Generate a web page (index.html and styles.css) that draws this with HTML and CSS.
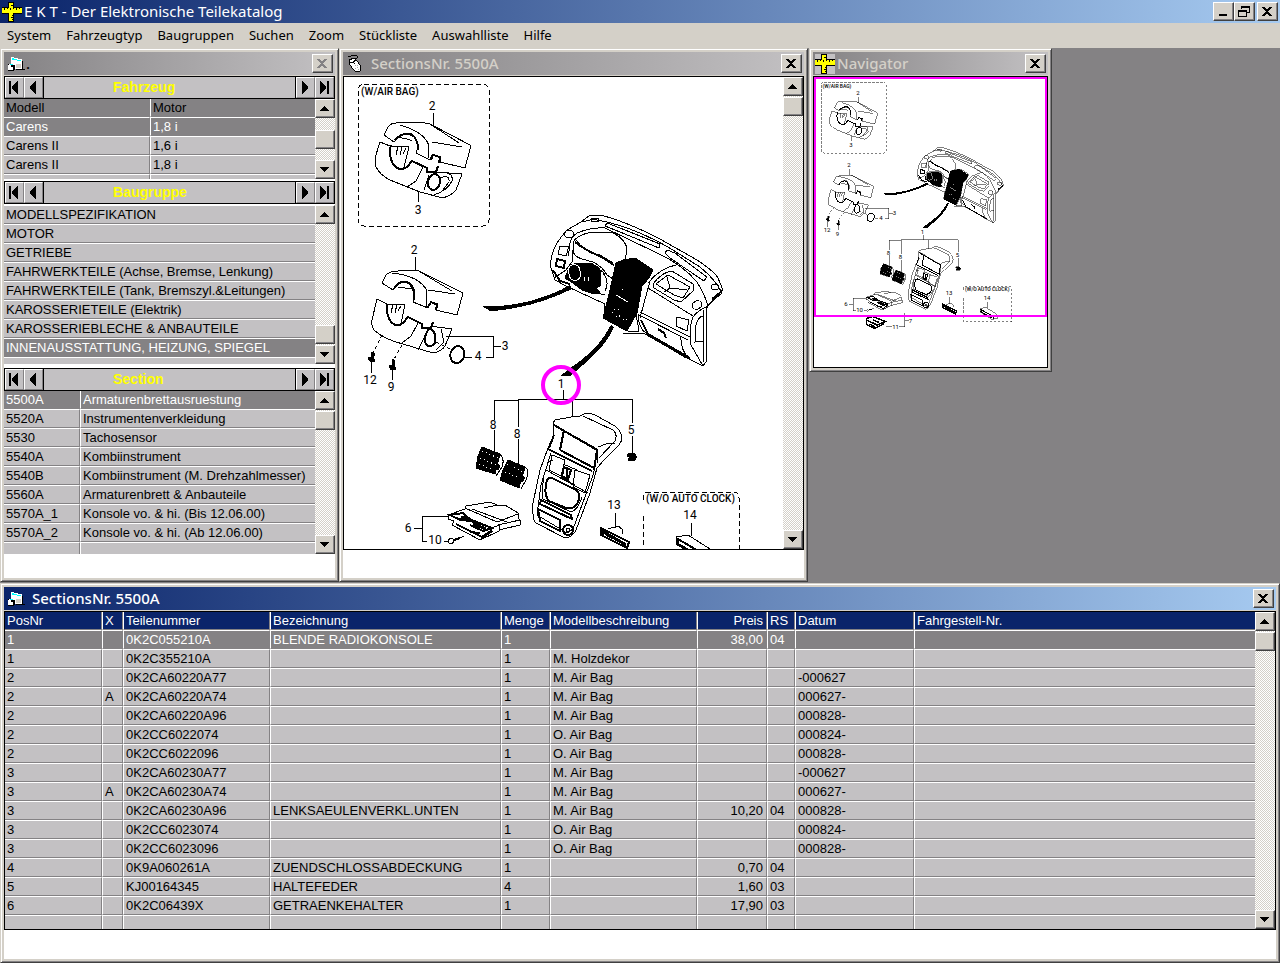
FILE: index.html
```html
<!DOCTYPE html>
<html lang="de">
<head>
    <meta charset="UTF-8">
    <meta name="viewport" content="width=device-width, initial-scale=1.0">
    <title>E K T - Der Elektronische Teilekatalog</title>
    <link rel="stylesheet" href="styles.css">
</head>
<body>
    <!-- shared icons -->
    <svg class="defs" width="0" height="0" aria-hidden="true">
        <symbol id="i-close" viewBox="0 0 10 9"><path d="M0 0h3v1h1v1h2v-1h1v-1h3v1h-1v1h-1v1h-1v1h-1v1h1v1h1v1h1v1h1v1h-3v-1h-1v-1h-2v1h-1v1h-3v-1h1v-1h1v-1h1v-1h1v-1h-1v-1h-1v-1h-1v-1h-1z"/></symbol>
        <symbol id="i-up" viewBox="0 0 9 5"><path d="M4 0h1v1h1v1h1v1h1v1h1v1h-9v-1h1v-1h1v-1h1v-1h1z"/></symbol>
        <symbol id="i-down" viewBox="0 0 9 5"><path d="M0 0h9v1h-1v1h-1v1h-1v1h-1v1h-1v-1h-1v-1h-1v-1h-1v-1h-1z"/></symbol>
        <symbol id="i-first" viewBox="0 0 10 13"><path d="M0 0h2v13h-2zM9 0v13h-1l-5-6v-1l5-6z"/></symbol>
        <symbol id="i-prev" viewBox="0 0 10 13"><path d="M8 0v13h-1l-5-6v-1l5-6z"/></symbol>
        <symbol id="i-next" viewBox="0 0 10 13"><path d="M2 0v13h1l5-6v-1l-5-6z"/></symbol>
        <symbol id="i-last" viewBox="0 0 10 13"><path d="M8 0h2v13h-2zM1 0v13h1l5-6v-1l-5-6z"/></symbol>
        <symbol id="i-ruler" viewBox="0 0 20 20">
            <path fill="#000" d="M6 0h6v20h-6zM0 5h20v7h-20z"/>
            <path fill="#ff0" d="M7 1h4v18h-4zM0 6h20v5h-20z"/>
            <path fill="#000" d="M9 3h2v1h-2zM10 13h1v1h-1zM9 15h2v1h-2zM10 17h1v1h-1zM2 6h1v2h-1zM5 6h1v1h-1zM8 6h1v2h-1zM11 6h1v1h-1zM14 6h1v2h-1zM17 6h1v1h-1z"/>
        </symbol>
        <symbol id="i-form" viewBox="0 0 18 16">
            <path fill="#fff" d="M3 1h3v1h4v1h4v10h-8v-4h-3z"/>
            <path fill="#d4d0c8" d="M8 8h5v4h-5z"/>
            <path fill="#0ff" d="M4 2h2v1h3v1h4v1h-4v-1h-5z"/>
            <path fill="#000" d="M14 5h1v8h2v1h-9v-1h6z"/>
            <path fill="#fff" d="M0 8h6v6h-6z"/>
            <path fill="#000" d="M3 9h4v5h-1v1h-6v-1h5v-3h-2zM0 8h1v1h-1z"/>
            <path fill="#0ff" d="M2 8h3v1h-3z"/>
        </symbol>
        <symbol id="i-mouse" viewBox="0 0 16 18">
            <path fill="none" stroke="#000" d="M1 2Q5 0 10 1Q11 4 7 3Q4 3 5 6"/>
            <path fill="#fff" stroke="#000" d="M2 5L7 3L11 7L14 12L13 16L9 17L5 13L2 8Z"/>
            <path fill="none" stroke="#000" d="M3 8L6 7L9 5M6 7L8 9"/>
            <path fill="#aaa" d="M8 10h1v1h-1zM10 12h1v1h-1zM8 13h1v1h-1zM11 14h1v1h-1zM10 10h1v1h-1z"/>
        </symbol>
    </svg>

    <header class="app-title">
        <svg class="icon-app"><use href="#i-ruler"/></svg>
        <h1>E K T - Der Elektronische Teilekatalog</h1>
        <button class="tb" aria-label="Minimieren"><svg width="8" height="9"><path d="M0 7h8v2h-8z"/></svg></button>
        <button class="tb" aria-label="Wiederherstellen"><svg width="12" height="11"><path fill-rule="evenodd" d="M3 0h9v7h-3v-1h2v-4h-7v1h-1zM0 4h9v7h-9zM1 6v4h7v-4z"/></svg></button>
        <button class="tb tb-close" aria-label="Schließen"><svg width="10" height="9"><use href="#i-close"/></svg></button>
    </header>

    <nav class="menu">
        <button>System</button>
        <button>Fahrzeugtyp</button>
        <button>Baugruppen</button>
        <button>Suchen</button>
        <button>Zoom</button>
        <button>Stückliste</button>
        <button>Auswahlliste</button>
        <button>Hilfe</button>
    </nav>

    <main class="mdi">
        <div class="top">
            <section class="window selection">
                <div class="title">
                    <svg class="icon-form"><use href="#i-form"/></svg>
                    <h2 class="dot">.</h2>
                    <button class="tb disabled" aria-label="Schließen" disabled><svg width="10" height="9"><use href="#i-close"/></svg></button>
                </div>
                <div class="client">
                    <div class="navbar">
                        <button aria-label="Erster"><svg><use href="#i-first"/></svg></button>
                        <button aria-label="Zurück"><svg><use href="#i-prev"/></svg></button>
                        <h3>Fahrzeug</h3>
                        <button aria-label="Weiter"><svg><use href="#i-next"/></svg></button>
                        <button aria-label="Letzter"><svg><use href="#i-last"/></svg></button>
                    </div>
                    <div class="list list-vehicle">
                        <div class="grid-wrap">
                            <table class="grid flush">
                                <colgroup><col class="c-model"><col></colgroup>
                                <thead><tr><th>Modell</th><th>Motor</th></tr></thead>
                                <tbody>
                                    <tr class="selected"><td>Carens</td><td>1,8 i</td></tr>
                                    <tr><td>Carens II</td><td>1,6 i</td></tr>
                                    <tr><td>Carens II</td><td>1,8 i</td></tr>
                                    <tr><td></td><td></td></tr>
                                </tbody>
                            </table>
                        </div>
                        <div class="scroll">
                            <button aria-label="Nach oben"><svg><use href="#i-up"/></svg></button>
                            <div class="track middle"><div class="thumb"></div></div>
                            <button aria-label="Nach unten"><svg><use href="#i-down"/></svg></button>
                        </div>
                    </div>

                    <div class="navbar">
                        <button aria-label="Erster"><svg><use href="#i-first"/></svg></button>
                        <button aria-label="Zurück"><svg><use href="#i-prev"/></svg></button>
                        <h3>Baugruppe</h3>
                        <button aria-label="Weiter"><svg><use href="#i-next"/></svg></button>
                        <button aria-label="Letzter"><svg><use href="#i-last"/></svg></button>
                    </div>
                    <div class="list list-group">
                        <div class="grid-wrap">
                            <table class="grid">
                                <tbody>
                                    <tr><td>MODELLSPEZIFIKATION</td></tr>
                                    <tr><td>MOTOR</td></tr>
                                    <tr><td>GETRIEBE</td></tr>
                                    <tr><td>FAHRWERKTEILE (Achse, Bremse, Lenkung)</td></tr>
                                    <tr><td>FAHRWERKTEILE (Tank, Bremszyl.&amp;Leitungen)</td></tr>
                                    <tr><td>KAROSSERIETEILE (Elektrik)</td></tr>
                                    <tr><td>KAROSSERIEBLECHE &amp; ANBAUTEILE</td></tr>
                                    <tr class="selected"><td>INNENAUSSTATTUNG, HEIZUNG, SPIEGEL</td></tr>
                                    <tr><td></td></tr>
                                </tbody>
                            </table>
                        </div>
                        <div class="scroll">
                            <button aria-label="Nach oben"><svg><use href="#i-up"/></svg></button>
                            <div class="track bottom"><div class="thumb"></div></div>
                            <button aria-label="Nach unten"><svg><use href="#i-down"/></svg></button>
                        </div>
                    </div>

                    <div class="navbar">
                        <button aria-label="Erster"><svg><use href="#i-first"/></svg></button>
                        <button aria-label="Zurück"><svg><use href="#i-prev"/></svg></button>
                        <h3>Section</h3>
                        <button aria-label="Weiter"><svg><use href="#i-next"/></svg></button>
                        <button aria-label="Letzter"><svg><use href="#i-last"/></svg></button>
                    </div>
                    <div class="list list-section">
                        <div class="grid-wrap">
                            <table class="grid flush">
                                <colgroup><col class="c-section"><col></colgroup>
                                <tbody>
                                    <tr class="selected"><td>5500A</td><td>Armaturenbrettausruestung</td></tr>
                                    <tr><td>5520A</td><td>Instrumentenverkleidung</td></tr>
                                    <tr><td>5530</td><td>Tachosensor</td></tr>
                                    <tr><td>5540A</td><td>Kombiinstrument</td></tr>
                                    <tr><td>5540B</td><td>Kombiinstrument (M. Drehzahlmesser)</td></tr>
                                    <tr><td>5560A</td><td>Armaturenbrett &amp; Anbauteile</td></tr>
                                    <tr><td>5570A_1</td><td>Konsole vo. &amp; hi. (Bis 12.06.00)</td></tr>
                                    <tr><td>5570A_2</td><td>Konsole vo. &amp; hi. (Ab 12.06.00)</td></tr>
                                    <tr><td></td><td></td></tr>
                                </tbody>
                            </table>
                        </div>
                        <div class="scroll">
                            <button aria-label="Nach oben"><svg><use href="#i-up"/></svg></button>
                            <div class="track"><div class="thumb"></div></div>
                            <button aria-label="Nach unten"><svg><use href="#i-down"/></svg></button>
                        </div>
                    </div>
                </div>
            </section>

            <section class="window picture">
                <div class="title">
                    <svg class="icon-mouse"><use href="#i-mouse"/></svg>
                    <h2>SectionsNr. 5500A</h2>
                    <button class="tb" aria-label="Schließen"><svg width="10" height="9"><use href="#i-close"/></svg></button>
                </div>
                <div class="client">
                    <div class="viewer">
                        <!-- exploded drawing of section 5500A -->
                        <svg class="drawing" viewBox="344 77 439 472" preserveAspectRatio="xMinYMin slice">
                            <g id="drawing">
                                <g fill="none" stroke="#000">
                                    <!-- covers with air bag -->
                                    <rect x="358" y="84" width="131" height="142" rx="6" stroke-dasharray="5 3"/>
                                    <path d="M384 135L388 127Q391 123 396 123L422 122.500L430 124L470 145L470 149L465 168L440 162L441 157L432 155L430 160L416 153Q420 144 415 138Q407 131 399 136L394 142Z"/>
                                    <path d="M400 125Q425 132 429 146L428 158M432 142L462 147M430 124L459 143M397 138Q405 137 412 141"/>
                                    <path stroke-width="2" d="M395 140Q402 132 411 134Q418 138 418 150M431 160L433 155L440 157L439 163"/>
                                    <path d="M380 142L375 158L376 167Q380 175 390 180L420 192L443 198Q452 195 456 190L462 174L435 172M380 142L390 146L409 147L404 167M398 146L396 155M402 147L400 155M406 148L403 154"/>
                                    <path stroke-width="2" d="M391 145Q388 155 393 164Q399 172 407 167L412 161L427 168L427 172L436 172L438 166"/>
                                    <path d="M423 167L416 181L407 187M424 190L429 175M438 173Q454 171 452 181Q448 190 434 195M440 178Q450 174 449 182L442 191"/>
                                    <ellipse cx="434" cy="182" rx="6" ry="8" stroke-width="2" transform="rotate(15 434 182)"/>
                                    <path d="M433.500 113V126M418.500 191V202"/>

                                    <!-- covers without air bag -->
                                    <path d="M382 283L386 275Q390 271 398 271L417 270L463 293L457 315L436 310L438 304L431 302L428 308L413 302L415 294Q414 283 405 281Q397 281 393 290Z"/>
                                    <path d="M392 273Q420 276 427 291L426 307M428 290L455 294M417 270L452 291M398 287L412 289"/>
                                    <path stroke-width="2" d="M394 289Q398 281 406 282Q415 285 414 300M428 307L431 302L437 305L436 310"/>
                                    <path d="M377 299L372 320Q371 327 375 331Q386 340 403 344L433 353Q441 352 445 346L452 329L430 326M377 299L387 304L405 304L401 324M393 304L391 313M397 304L395 313M401 306L398 311"/>
                                    <path stroke-width="2" d="M387 304Q386 315 391 322Q397 328 403 323L408 317L422 324V328L431 328L433 322"/>
                                    <path d="M418 323L411 336L402 343M418 350L428 330M441 329L444 342L436 350"/>
                                    <path d="M430 328Q437 332 435 343Q428 350 425 342Q424 334 430 328Z" stroke-width="2"/>
                                    <path stroke-dasharray="3 3" d="M382 335L373 353M402 345L393 361M436 342L452 350"/>
                                    <ellipse cx="457.500" cy="354.500" rx="7" ry="8.500" stroke-width="2" transform="rotate(15 457 354)"/>
                                    <path d="M415.500 257V270M446 336.500H493.500V357.500H486M465 357.500H472M493 346.500H501M371.500 362V373M392.500 370V380"/>
                                    <path fill="#000" d="M372 352L375 354L373 358L375 361L371 362L368 358L371 357ZM393 359L395 362L394 366L396 369L391 370L389 366L392 365Z"/>

                                    <!-- dashboard -->
                                    <path d="M590 215L600 215Q625 221 660 239L697 260Q715 272 718 278L723 290L712 301L706 309V362M590 215L581 222L567 230Q555 243 552 255L550 265L555 280L566 286L605 304M604 303L604 318M706 362L703 366L687 358L645 334L623 333"/>
                                    <path d="M590 219Q625 223 668 247L700 267Q716 280 722 293L708 305M582 222L590 220M569 256Q568 238 577 233Q592 227 605 228L655 252Q682 264 697 282Q705 295 708 306Q698 310 693 317Q689 326 691 345L703 366M703 310V362M607 223L620 228L660 244L659 248L620 232L605 226ZM667 250L675 253L707 277L704 281L670 258L665 253Z"/>
                                    <path d="M573 250V242Q577 235 592 232L613 233Q627 240 627 251L625 260M573 250Q573 256 582 259L593 262Q603 267 607 275L614 280M576 240Q584 252 600 255L613 263M554 278L566 270L572 262L573 250M605 291Q610 282 603 273M593 292L605 295M600 270L613 279"/>
                                    <path stroke-width="2" d="M575 242Q588 252 600 256L614 265M557 259L565 261L564 268L556 266Z"/>
                                    <path d="M648 283Q660 268 676 265M640 318L650 281M653 284Q662 272 672 271L693 284L694 290L681 302L674 300L654 288ZM656 284L668 275L690 287L683 298L674 295ZM667 277L670 288L687 290M670 288L664 292"/>
                                    <path d="M648 288L693 316M640 312L690 337M639 315L688 340M638 314Q638 328 647 334L686 358M681 336Q680 348 688 358M677 317L689 320L687 331L676 326ZM696 325Q698 317 703 316M696 325L695 342L703 341M560 246H569L566 256L558 254ZM636 314L639 331L628 332"/>
                                    <ellipse cx="569" cy="234" rx="5" ry="4"/>
                                    <ellipse cx="595" cy="220" rx="4" ry="2"/>
                                    <ellipse cx="697" cy="305" rx="5" ry="4" transform="rotate(-30 697 305)"/>
                                    <ellipse cx="715" cy="287" rx="4" ry="3"/>
                                    <path stroke-width="2" d="M658 329L664 333L666 338M641 320L648 334L690 358M712 299L722 291M553 270L560 281L570 284"/>
                                    <path fill="#000" d="M570 265L578 263L591 263L599 268L601 274L600 286L596 288L600 292L594 294L582 290L573 283L565 278Z"/>
                                    <path fill="#000" d="M616 263L623 260L635 258L653 270L649 278L642 286L637 313L627 331L603 318L606 306L610 290Z"/>
                                    <path stroke="#fff" d="M569 274A6 6 0 1 0 580 271A6 6 0 1 0 569 274M584 277V281M588 277L589 281"/>
                                    <path stroke="#fff" stroke-dasharray="1 3" d="M612 312L627 320M616 316L624 320M622 289H624M614 309H622"/>
                                    <path stroke="#fff" d="M616 295L628 302"/>
                                    <path fill="#000" stroke="none" d="M482 306Q500 308 530 301Q555 294 570 285L572 289Q545 302 520 307Q500 311 490 311ZM611 325Q600 346 580 361Q570 368 560 376L570 376Q580 368 592 357Q607 343 614 327Z"/>

                                    <!-- console bezel and parts -->
                                    <path d="M494.500 420V400.500H518M494.500 430V452M518.500 427V399.500H632.500V423M518.500 439V464M572.500 399V417M632.500 436V453M563.500 390V399"/>
                                    <path fill="#000" d="M482 447L500 454L495 474L476 468L478 456ZM508 460L525 467L519 488L500 480L503 470Z"/>
                                    <path d="M500 454Q505 459 502 467L496 476M525 467Q530 470 526 480L521 489"/>
                                    <path stroke="#fff" stroke-dasharray="1 3" d="M482 451L498 458M480 458L496 465M507 464L523 472M505 472L520 478M479 464L493 470"/>
                                    <path fill="#000" d="M497 464L500 466L498 470L496 468ZM523 476L525 478L522 482L520 480ZM628 454L634 453L637 457L634 461L628 460L630 457L627 456Z"/>
                                    <path d="M553 423L555 420L571 417L580 416L586 413Q592 413 597 416L613 425Q620 428 622 437Q622 441 619 445L604 460L597 468L590 493L576 530Q573 537 565 538L536 523Q532 520 533 503L540 470L548 448L554 435ZM553 424L597 449L598 463M583 416L613 430Q618 434 615 441L599 458M598 447L606 444L615 443M551 453L541 485L537 515L567 533L573 529L592 478L595 468"/>
                                    <path stroke-width="2" d="M554 425L597 450L594 470M564 430L560 450M548 449L592 471M554 435L549 448M560 450L594 468"/>
                                    <path d="M552 455L565 460L561 476L549 470ZM575 470L590 475L585 493L573 487ZM563 464L577 470M548 462L553 460M560 477L575 485M546 470L588 493"/>
                                    <path stroke-width="2" d="M564 467L571 470L568 480L562 476ZM567 468V478M547 480Q550 476 556 480L576 490Q582 495 577 504Q573 510 566 508L549 501Q543 494 547 480ZM541 500L571 515L572 519L540 504ZM538 509L560 520V531L540 521Z"/>
                                    <path d="M544 477Q541 492 543 499L571 512Q578 510 582 497"/>
                                    <circle cx="568" cy="530" r="5" stroke-width="2"/>
                                    <circle cx="568" cy="530" r="2"/>
                                    <path d="M448 515L465 509L466 506L490 502L497 505L505 505L518 513V518L520 520V525L499 530M448 515L492 528L499 525V531L480 540L452 525L454 521L448 519ZM472 509L507 522M497 505L484 508M518 514L497 522L465 508M520 520L498 525M481 539L493 531"/>
                                    <path stroke-width="2" d="M450 515L463 513L472 521L460 520ZM464 517L492 528L483 531L470 525M456 524L482 537L492 530M470 532L480 533"/>
                                    <path stroke-width="3" d="M461 517L470 520M473 524L486 529"/>
                                    <path d="M414 528.500H422M448 516.500H422.500V541.500H427M444 541.500H448"/>
                                    <circle cx="451" cy="541" r="2.500"/>
                                    <path stroke-width="2" d="M454 540L460 538"/>
                                    <path d="M460 538L464 536M615.500 513V528M608 529L618 526L622 529V534M607 530L609 533M691.500 523V536"/>
                                    <path stroke-width="2" d="M601 528L629 542L627 548L601 535ZM603 530L603 536M606 535L624 543"/>
                                    <path stroke-width="3" d="M604 532L626 545"/>
                                    <path d="M643 545V515M643 500V498Q643 492 650 492H733Q739 492 739 498V563H643V549" stroke-dasharray="5 3"/>
                                    <path d="M676 537L688 535L710 549L712 556L700 559L676 544Z"/>
                                    <path stroke-width="2" d="M676 538L702 553V558M676 543L700 556M678 540V544"/>
                                </g>
                                <g class="labels">
                                    <text class="caption" x="361" y="95">(W/AIR BAG)</text>
                                    <text class="caption" x="646" y="502">(W/O AUTO CLOCK)</text>
                                    <text x="432" y="110">2</text>
                                    <text x="418" y="214">3</text>
                                    <text x="414" y="254">2</text>
                                    <text x="505" y="350">3</text>
                                    <text x="478" y="360">4</text>
                                    <text x="370" y="384">12</text>
                                    <text x="391" y="391">9</text>
                                    <text x="561" y="388">1</text>
                                    <text x="493" y="429">8</text>
                                    <text x="517" y="438">8</text>
                                    <text x="631" y="434">5</text>
                                    <text x="408" y="532">6</text>
                                    <text x="435" y="544">10</text>
                                    <text x="614" y="509">13</text>
                                    <text x="690" y="519">14</text>
                                </g>
                            </g>
                            <circle class="marker" cx="561" cy="385" r="18"/>
                        </svg>
                        <div class="scroll">
                            <button aria-label="Nach oben"><svg><use href="#i-up"/></svg></button>
                            <div class="track"><div class="thumb"></div></div>
                            <button aria-label="Nach unten"><svg><use href="#i-down"/></svg></button>
                        </div>
                    </div>
                </div>
            </section>

            <section class="window navigator">
                <div class="title">
                    <span class="icon-box"><svg class="icon-app"><use href="#i-ruler"/></svg></span>
                    <h2>Navigator</h2>
                    <button class="tb" aria-label="Schließen"><svg width="10" height="9"><use href="#i-close"/></svg></button>
                </div>
                <div class="overview">
                    <svg class="drawing small" viewBox="0 0 233 290">
                        <use href="#drawing" transform="scale(.5) translate(-344 -74)"/>
                        <!-- lighter, below the part shown in the picture window -->
                        <g transform="scale(.5) translate(-344 -74)">
                            <path fill="none" stroke="#000" stroke-width="3" d="M449 557L462 553L486 563L470 570L449 560V569L466 577L484 567M455 568L466 574M462 560L474 565"/>
                            <path fill="none" stroke="#000" d="M487 573H500M514 573H525V545M525 561H533"/>
                            <g class="labels">
                                <text x="507" y="577">11</text>
                                <text x="537" y="565">7</text>
                            </g>
                        </g>
                        <rect class="frame" x="1" y="1" width="231" height="238"/>
                    </svg>
                </div>
            </section>
        </div>

        <section class="window active parts">
            <div class="title">
                <svg class="icon-form"><use href="#i-form"/></svg>
                <h2>SectionsNr. 5500A</h2>
                <button class="tb" aria-label="Schließen"><svg width="10" height="9"><use href="#i-close"/></svg></button>
            </div>
            <div class="client">
                <div class="list list-parts">
                    <div class="grid-wrap">
                        <table class="grid flush">
                            <colgroup>
                                <col class="c-pos"><col class="c-x"><col class="c-number"><col class="c-name"><col class="c-qty">
                                <col class="c-desc"><col class="c-price"><col class="c-rs"><col class="c-date"><col>
                            </colgroup>
                            <thead>
                                <tr><th>PosNr</th><th>X</th><th>Teilenummer</th><th>Bezeichnung</th><th>Menge</th><th>Modellbeschreibung</th><th class="num">Preis</th><th>RS</th><th>Datum</th><th>Fahrgestell-Nr.</th></tr>
                            </thead>
                            <tbody>
                                <tr class="selected"><td>1</td><td></td><td>0K2C055210A</td><td>BLENDE RADIOKONSOLE</td><td>1</td><td></td><td class="num">38,00</td><td>04</td><td></td><td></td></tr>
                                <tr><td>1</td><td></td><td>0K2C355210A</td><td></td><td>1</td><td>M. Holzdekor</td><td></td><td></td><td></td><td></td></tr>
                                <tr><td>2</td><td></td><td>0K2CA60220A77</td><td></td><td>1</td><td>M. Air Bag</td><td></td><td></td><td>-000627</td><td></td></tr>
                                <tr><td>2</td><td>A</td><td>0K2CA60220A74</td><td></td><td>1</td><td>M. Air Bag</td><td></td><td></td><td>000627-</td><td></td></tr>
                                <tr><td>2</td><td></td><td>0K2CA60220A96</td><td></td><td>1</td><td>M. Air Bag</td><td></td><td></td><td>000828-</td><td></td></tr>
                                <tr><td>2</td><td></td><td>0K2CC6022074</td><td></td><td>1</td><td>O. Air Bag</td><td></td><td></td><td>000824-</td><td></td></tr>
                                <tr><td>2</td><td></td><td>0K2CC6022096</td><td></td><td>1</td><td>O. Air Bag</td><td></td><td></td><td>000828-</td><td></td></tr>
                                <tr><td>3</td><td></td><td>0K2CA60230A77</td><td></td><td>1</td><td>M. Air Bag</td><td></td><td></td><td>-000627</td><td></td></tr>
                                <tr><td>3</td><td>A</td><td>0K2CA60230A74</td><td></td><td>1</td><td>M. Air Bag</td><td></td><td></td><td>000627-</td><td></td></tr>
                                <tr><td>3</td><td></td><td>0K2CA60230A96</td><td>LENKSAEULENVERKL.UNTEN</td><td>1</td><td>M. Air Bag</td><td class="num">10,20</td><td>04</td><td>000828-</td><td></td></tr>
                                <tr><td>3</td><td></td><td>0K2CC6023074</td><td></td><td>1</td><td>O. Air Bag</td><td></td><td></td><td>000824-</td><td></td></tr>
                                <tr><td>3</td><td></td><td>0K2CC6023096</td><td></td><td>1</td><td>O. Air Bag</td><td></td><td></td><td>000828-</td><td></td></tr>
                                <tr><td>4</td><td></td><td>0K9A060261A</td><td>ZUENDSCHLOSSABDECKUNG</td><td>1</td><td></td><td class="num">0,70</td><td>04</td><td></td><td></td></tr>
                                <tr><td>5</td><td></td><td>KJ00164345</td><td>HALTEFEDER</td><td>4</td><td></td><td class="num">1,60</td><td>03</td><td></td><td></td></tr>
                                <tr><td>6</td><td></td><td>0K2C06439X</td><td>GETRAENKEHALTER</td><td>1</td><td></td><td class="num">17,90</td><td>03</td><td></td><td></td></tr>
                                <tr><td></td><td></td><td></td><td></td><td></td><td></td><td></td><td></td><td></td><td></td></tr>
                            </tbody>
                        </table>
                    </div>
                    <div class="scroll">
                        <button aria-label="Nach oben"><svg><use href="#i-up"/></svg></button>
                        <div class="track"><div class="thumb"></div></div>
                        <button aria-label="Nach unten"><svg><use href="#i-down"/></svg></button>
                    </div>
                </div>
            </div>
        </section>
    </main>
</body>
</html>
```
FILE: styles.css
```css
* { box-sizing: border-box; margin: 0; padding: 0; }
body {
    display: flex;
    flex-direction: column;
    min-height: 100vh;
    background-color: #848284;
    font-family: "Liberation Sans", Arial, sans-serif;
    font-size: 13px;
    color: #000;
}
svg { display: block; flex: none; shape-rendering: crispEdges; }
.defs { position: absolute; }
button {
    background-color: #d4d0c8;
    border: none;
    color: inherit;
    font: inherit;
}

/* application title and menu */
.app-title {
    display: flex;
    align-items: center;
    height: 23px;
    padding: 0 2px;
    background: linear-gradient(to right, #0a246a, #a6caf0);
    color: #fff;
}
.app-title h1, .title h2 {
    flex: 1;
    padding-bottom: 2px;
    font-family: "Noto Sans", "Open Sans", sans-serif;
    font-size: 15px;
    font-weight: 500;
    line-height: 20px;
    white-space: nowrap;
}
.app-title h1 { padding-left: 2px; font-weight: 400; }
.icon-app { width: 20px; height: 20px; }
.icon-form { width: 18px; height: 16px; margin-left: 4px; }
.icon-mouse { width: 16px; height: 18px; margin-left: 4px; }
.icon-box { background-color: #c3c1c3; margin-left: 2px; }
.tb {
    display: flex;
    align-items: center;
    justify-content: center;
    width: 21px;
    height: 19px;
    padding-right: 1px;
    border: 1px solid;
    border-color: #fff #404040 #404040 #fff;
    box-shadow: inset -1px -1px #848284;
}
.tb-close { margin-left: 2px; }
.tb.disabled svg { fill: #848284; }
.menu {
    display: flex;
    gap: 1px;
    height: 25px;
    background-color: #d4d0c8;
}
.menu button {
    padding: 0 7px 2px;
    font-family: "Noto Sans", "Open Sans", sans-serif;
    font-size: 13px;
}

/* windows */
.mdi { display: flex; flex-direction: column; flex: 1; gap: 1px; }
.top { display: flex; align-items: flex-start; }
.window {
    display: flex;
    flex-direction: column;
    padding: 3px;
    background-color: #d4d0c8;
    border: 1px solid;
    border-color: #d4d0c8 #404040 #404040 #d4d0c8;
    box-shadow: inset 1px 1px #fff, inset -1px -1px #848284;
}
.selection { width: 339px; align-self: stretch; }
.picture { width: 469px; align-self: stretch; }
.navigator { width: 243px; margin-left: 1px; }
.parts { flex: 1; }
.title {
    display: flex;
    align-items: center;
    height: 23px;
    margin-bottom: 1px;
    padding-right: 2px;
    background: linear-gradient(to right, #848284, #c3c1c3);
    color: #d4d0c8;
}
.title h2 { padding-left: 6px; }
.title .icon-mouse + h2 { padding-left: 8px; }
.title .icon-box + h2 { padding-left: 2px; }
.title .dot { padding-left: 0; color: #000; }
.active .title { background: linear-gradient(to right, #0a246a, #a6caf0); color: #fff; }
.client { flex: 1; background-color: #fff; padding-bottom: 24px; }

/* record navigation */
.navbar {
    display: flex;
    height: 23px;
    border: 1px solid #000;
    background-color: #c3c1c3;
}
.navbar h3 {
    flex: 1;
    padding-left: 69px;
    font-size: 14px;
    line-height: 21px;
    color: #ff0;
    border: solid #000;
    border-width: 0 1px;
}
.navbar button {
    display: flex;
    align-items: center;
    justify-content: center;
    width: 19px;
    padding-right: 1px;
    background-color: #c3c1c3;
    border: 1px solid;
    border-color: #fff #848284 #848284 #fff;
}
.navbar svg { width: 10px; height: 13px; }

/* lists */
.list { display: flex; }
.list-vehicle { height: 80px; margin-bottom: 2px; }
.list-group { height: 159px; margin: 1px 0 4px; }
.list-section { height: 163px; }
.list-parts { height: 319px; border: 1px solid #000; }
.grid-wrap { flex: 1; overflow: hidden; }
.grid {
    width: 100%;
    table-layout: fixed;
    border-collapse: separate;
    border-spacing: 0;
}
.grid td, .grid th {
    height: 19px;
    padding: 1px 2px 0;
    line-height: 16px;
    font-weight: normal;
    text-align: left;
    white-space: nowrap;
    background-color: #c3c1c3;
    border: 1px solid;
    border-color: #fff #848284 #848284 #fff;
}
.grid td:first-child, .grid th:first-child { border-left: none; }
.grid td:last-child, .grid th:last-child { border-right: none; }
.grid.flush tr:first-child th, .grid.flush colgroup + tbody tr:first-child td { height: 18px; border-top: none; }
.grid th, .grid .selected td { background-color: #848284; }
.grid .selected td { color: #fff; }
.grid .num { text-align: right; padding-right: 3px; }
.active .grid th { background-color: #0a246a; color: #fff; }
.c-model { width: 146px; }
.c-section { width: 76px; }
.c-pos { width: 97px; }
.c-x { width: 21px; }
.c-number, .c-desc { width: 147px; }
.c-name { width: 231px; }
.c-qty { width: 49px; }
.c-price { width: 70px; }
.c-rs { width: 28px; }
.c-date { width: 119px; }

/* scroll bars */
.scroll { display: flex; flex-direction: column; width: 20px; }
.scroll button, .thumb {
    display: flex;
    align-items: center;
    justify-content: center;
    height: 19px;
    padding-right: 1px;
    background-color: #d4d0c8;
    border: 1px solid;
    border-color: #fff #404040 #404040 #fff;
    box-shadow: inset -1px -1px #848284;
}
.scroll svg { width: 9px; height: 5px; }
.track {
    display: flex;
    flex-direction: column;
    flex: 1;
    padding: 1px 0;
    background: repeating-conic-gradient(#fff 0 25%, #d4d0c8 0 50%) 0 0 / 2px 2px;
}
.track.middle { justify-content: center; }
.track.bottom { justify-content: flex-end; }

/* drawing and overview */
.viewer { display: flex; border: 1px solid #000; }
.drawing { flex: 1; min-width: 0; height: 472px; overflow: hidden; stroke-width: 1; }
.overview { border: 1px solid #000; background-color: #fff; }
.drawing.small { width: 100%; height: 290px; }
.marker { fill: none; stroke: #f0f; stroke-width: 4; shape-rendering: auto; }
.frame { fill: none; stroke: #f0f; stroke-width: 2; }
.labels { font-family: Roboto, "Liberation Sans", sans-serif; font-size: 12px; text-anchor: middle; }
.labels .caption { font-size: 10px; font-weight: 500; text-anchor: start; }
```
